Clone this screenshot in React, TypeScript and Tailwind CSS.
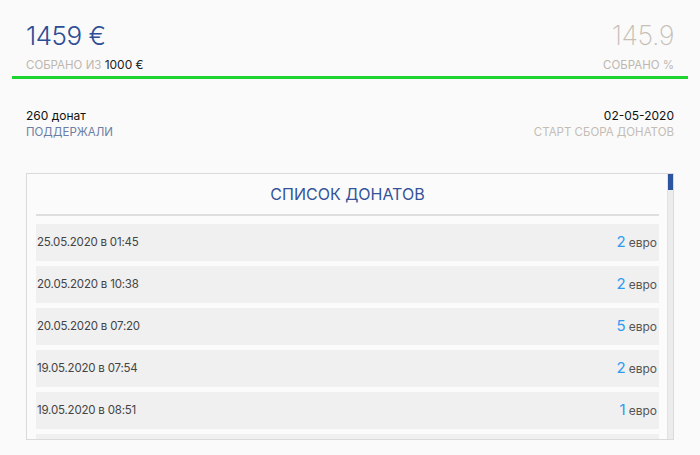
import React from 'react'

const donations = [
  { date: '25.05.2020 в 01:45', amount: 2 },
  { date: '20.05.2020 в 10:38', amount: 2 },
  { date: '20.05.2020 в 07:20', amount: 5 },
  { date: '19.05.2020 в 07:54', amount: 2 },
  { date: '19.05.2020 в 08:51', amount: 1 },
]

export default function App() {
  return (
    <div className="min-h-screen bg-[#fafafa] font-['Inter',sans-serif] overflow-hidden h-[455px]">
      {/* Header */}
      <div className="flex justify-between items-end px-[26px] pt-[19px]">
        <div>
          <div className="text-[26px] leading-[34px] font-light text-[#2d4d95] tracking-[-0.5px]">1459 €</div>
          <div className="mt-[5px] text-[11.5px] leading-[14px] text-[#bdb7b0]">
            СОБРАНО ИЗ <span className="text-[#222] text-[12px]">1000 €</span>
          </div>
        </div>
        <div className="text-right">
          <div className="text-[27px] leading-[34px] font-extralight text-[#c7bfb6] tracking-[-0.5px]">145.9</div>
          <div className="mt-[5px] text-[11.5px] leading-[14px] text-[#bdb7b0]">СОБРАНО %</div>
        </div>
      </div>
      <div className="mx-[12px] mt-[4px] h-[3px] bg-[#1fd42f]" />

      {/* Info */}
      <div className="flex justify-between px-[26px] mt-[29px]">
        <div>
          <div className="text-[12px] leading-[16px] text-[#111]">260 донат</div>
          <div className="text-[11.5px] leading-[16px] text-[#6c7ea3]">ПОДДЕРЖАЛИ</div>
        </div>
        <div className="text-right">
          <div className="text-[12px] leading-[16px] text-[#111]">02-05-2020</div>
          <div className="text-[11.5px] leading-[16px] text-[#c3bdb5]">СТАРТ СБОРА ДОНАТОВ</div>
        </div>
      </div>

      {/* Donations list */}
      <div className="mx-[26px] mt-[33px] h-[267px] border border-[#dadada] flex overflow-hidden bg-[#fbfbfb]">
        <div className="flex-1 pl-[9px] pr-[8px] overflow-hidden">
          <div className="h-[40px] flex items-center justify-center text-[16px] text-[#34539a]">СПИСОК ДОНАТОВ</div>
          <div className="h-[2px] bg-[#dedede]" />
          <div className="mt-[8px] flex flex-col gap-[5px]">
            {donations.map((d, i) => (
              <div key={i} className="h-[37px] shrink-0 bg-[#f0f0f0] flex items-center justify-between pl-[1px] pr-[2px]">
                <span className="text-[11.5px] text-[#444] tracking-[-0.2px]">{d.date}</span>
                <span className="flex items-baseline gap-[3px]">
                  <span className="text-[15px] text-[#2f9bf0]">{d.amount}</span>
                  <span className="text-[12px] text-[#555]">евро</span>
                </span>
              </div>
            ))}
            {/* next row peeking under the fold */}
            <div className="h-[37px] shrink-0 bg-[#f0f0f0]" />
          </div>
        </div>
        <div className="w-[6px] bg-[#ececec] border-l border-[#e2e2e2]">
          <div className="h-[16px] bg-[#2c55a0]" />
        </div>
      </div>
    </div>
  )
}
